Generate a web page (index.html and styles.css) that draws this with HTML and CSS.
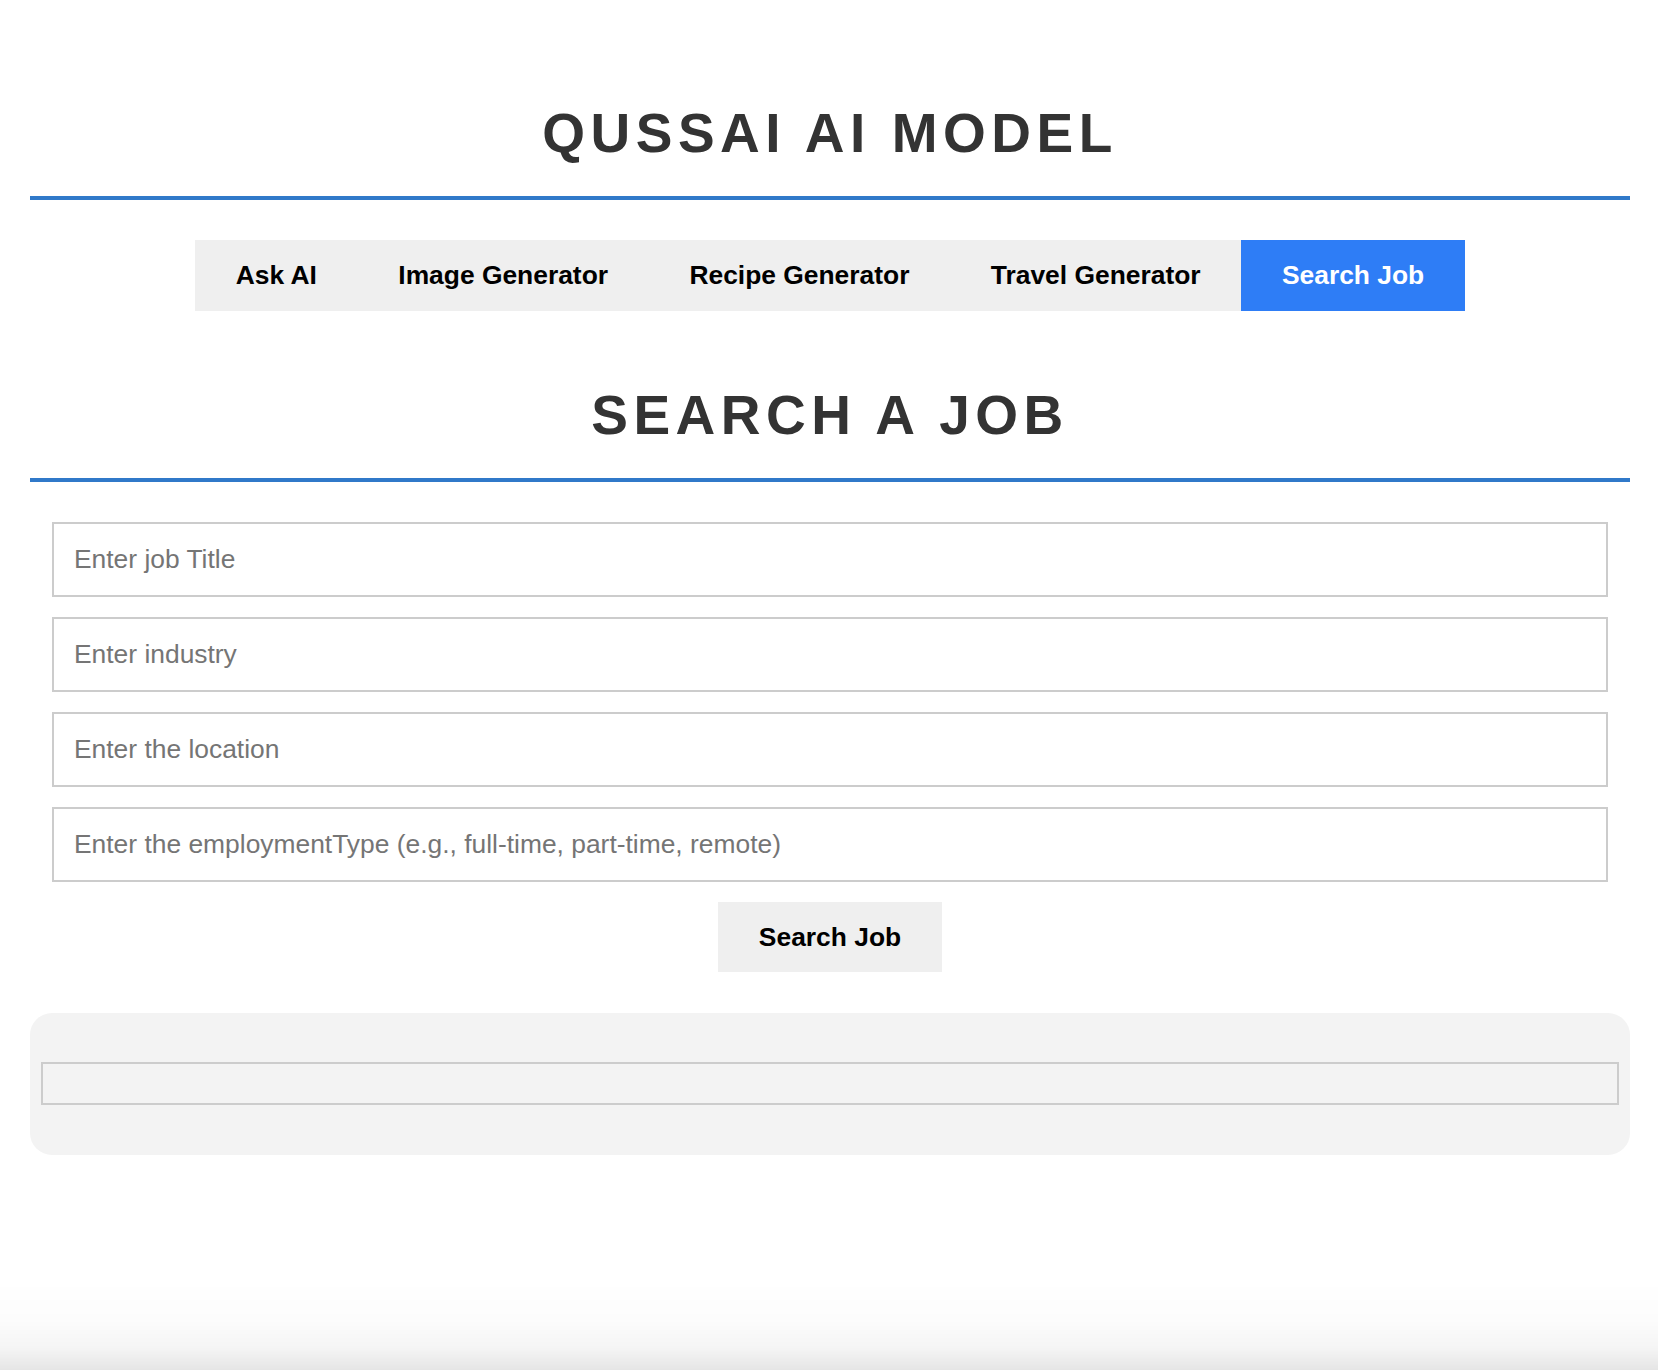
FILE: index.html
```html
<!DOCTYPE html>
<html lang="en">
<head>
<meta charset="utf-8">
<title>Qussai AI Model</title>
<link rel="stylesheet" href="styles.css">
</head>
<body>
<div class="page">
  <header class="site-header">
    <h1 class="page-title">QUSSAI AI MODEL</h1>
  </header>
  <nav class="tabs">
    <a class="tab" href="#">Ask AI</a>
    <a class="tab" href="#">Image Generator</a>
    <a class="tab" href="#">Recipe Generator</a>
    <a class="tab" href="#">Travel Generator</a>
    <a class="tab tab-active" href="#">Search Job</a>
  </nav>
  <section class="job-section">
    <h2 class="section-title">SEARCH A JOB</h2>
    <form class="job-form">
      <input class="field" type="text" placeholder="Enter job Title">
      <input class="field" type="text" placeholder="Enter industry">
      <input class="field" type="text" placeholder="Enter the location">
      <input class="field" type="text" placeholder="Enter the employmentType (e.g., full-time, part-time, remote)">
      <button class="submit" type="button">Search Job</button>
    </form>
    <div class="results">
      <div class="results-box"></div>
    </div>
  </section>
</div>
<div class="bottom-fade"></div>
</body>
</html>
```

FILE: styles.css
```css
html, body {
  margin: 0;
  padding: 0;
  background: #ffffff;
}

body {
  font-family: "Liberation Sans", Arial, Helvetica, sans-serif;
  color: #000;
}

.page {
  width: 1600px;
  margin: 0 28px 0 30px;
  padding-top: 101px;
}

.page-title,
.section-title {
  margin: 0;
  padding-bottom: 31px;
  border-bottom: 4px solid #3079c9;
  font-size: 55px;
  line-height: normal;
  font-weight: 700;
  letter-spacing: 5.5px;
  text-align: center;
  color: #333333;
}

.tabs {
  display: flex;
  justify-content: center;
  margin-top: 40px;
}

.tab {
  display: block;
  padding: 20px 40.7px;
  line-height: 31px;
  font-size: 26.4px;
  font-weight: 700;
  color: #000;
  background: #efefef;
  text-decoration: none;
}

.tab-active {
  background: #2e7df6;
  color: #fff;
}

.job-section {
  margin-top: 72px;
}

.job-form {
  display: flex;
  flex-direction: column;
  align-items: center;
  gap: 20px;
  padding: 40px 22px 0;
}

.field {
  display: block;
  width: 100%;
  box-sizing: border-box;
  padding: 20px 20px;
  border: 2px solid #cccccc;
  border-radius: 0;
  font-family: "Liberation Sans", Arial, Helvetica, sans-serif;
  font-size: 26.4px;
  line-height: normal;
  color: #000;
  background: #fff;
  outline: none;
}

.field::placeholder {
  color: #757575;
}

.submit {
  padding: 0 40.7px;
  height: 70px;
  border: none;
  background: #efefef;
  font-family: "Liberation Sans", Arial, Helvetica, sans-serif;
  font-size: 26.4px;
  font-weight: 700;
  color: #000;
  cursor: pointer;
}

.results {
  margin-top: 41px;
  padding: 49px 11px 50px;
  background: #f3f3f3;
  border-radius: 22px;
}

.results-box {
  height: 39px;
  border: 2px solid #cccccc;
}

.bottom-fade {
  position: fixed;
  left: 0;
  right: 0;
  bottom: 0;
  height: 90px;
  pointer-events: none;
  background: linear-gradient(to bottom,
    rgba(0, 0, 0, 0) 0%,
    rgba(0, 0, 0, 0.012) 45%,
    rgba(0, 0, 0, 0.04) 75%,
    rgba(0, 0, 0, 0.1) 100%);
}
```
